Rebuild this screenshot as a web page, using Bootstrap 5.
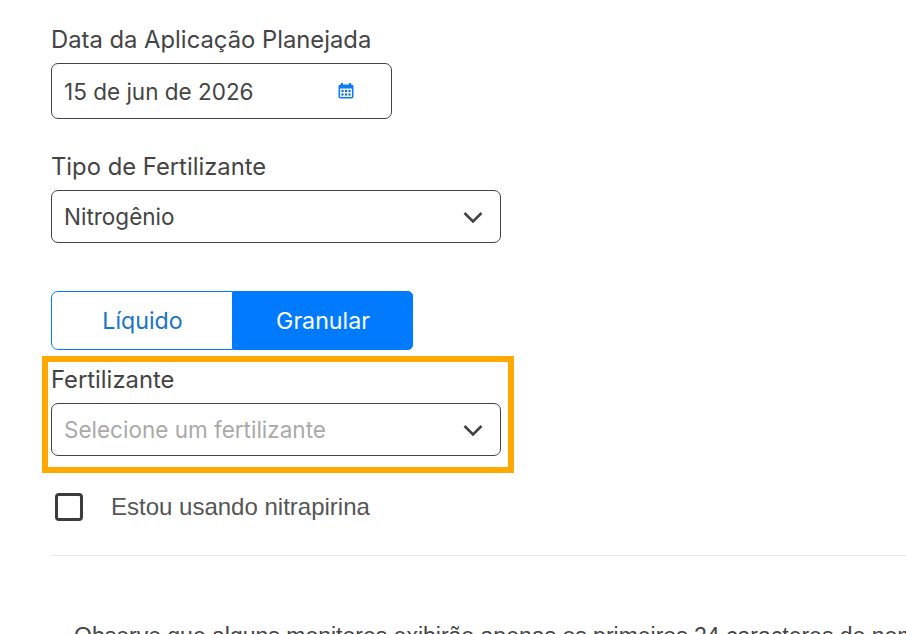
<!DOCTYPE html>
<html lang="pt-BR">
  <head>
    <meta charset="UTF-8" />
    <meta name="viewport" content="width=device-width, initial-scale=1.0" />
    <title>Fertilizante</title>
    <link
      href="https://cdn.jsdelivr.net/npm/bootstrap@5.3.2/dist/css/bootstrap.min.css"
      rel="stylesheet"
    />
    <style>
      html,
      body {
        height: 634px;
        overflow: hidden;
      }
      body {
        font-family: Inter, "Liberation Sans", sans-serif;
        color: #444;
      }
      .page-wrap {
        padding: 26px 0 0 51px;
      }
      .field-label {
        display: block;
        font-size: 23.8px;
        line-height: 27px;
        margin: 0 0 10px 0;
        color: #444;
      }
      .fake-input {
        display: flex;
        align-items: center;
        justify-content: space-between;
        height: 53px;
        width: 450px;
        padding: 0 17px 0 12px;
        font-size: 22.5px;
        color: #444;
        background: #fff;
        border: 1px solid #444;
        border-radius: 7px;
      }
      .fake-input.date-input {
        width: 341px;
        height: 56px;
        padding-top: 2px;
        padding-right: 36px;
        margin-bottom: 34px;
      }
      .fake-input.date-input svg {
        margin-top: -2px;
      }
      .fake-input.placeholder-text {
        color: #a9a9a9;
      }
      .toggle-group {
        display: flex;
        width: 362px;
        height: 59px;
        margin: 48px 0 6px;
      }
      .toggle-group .btn {
        font-size: 23.2px;
        font-family: Inter, "Liberation Sans", sans-serif;
        border-color: #007bff;
        padding: 2px 0 0;
      }
      .toggle-group .btn-off {
        width: 182px;
        padding-left: 1px;
        color: #1a75c9;
        background: #fff;
        border-radius: 7px 0 0 7px;
      }
      .toggle-group .btn-on {
        width: 180px;
        color: #fff;
        background: #007bff;
        border-radius: 0 5px 5px 0;
      }
      .highlight-box {
        width: 472px;
        height: 117px;
        margin-left: -9px;
        padding: 4px 3px 0;
        border: 6px solid #ffa800;
      }
      .highlight-box .field-label {
        margin-bottom: 10px;
      }
      .nitra-row {
        display: flex;
        align-items: center;
        gap: 28px;
        margin: 16px 0 0 4px;
        font-family: "Liberation Sans", sans-serif;
        font-size: 24px;
        color: #555;
      }
      .nitra-box {
        width: 28px;
        height: 28px;
        border: 3px solid #3c3c3c;
        border-radius: 4px;
      }
      .divider {
        margin: 30px 0 0;
        border: 0;
        border-top: 1px solid #e6e6e6;
        opacity: 1;
      }
      .note-text {
        margin: 63px 0 0 23px;
        font-family: "Liberation Sans", sans-serif;
        font-size: 23px;
        white-space: nowrap;
        color: #444;
      }
    </style>
  </head>
  <body>
    <div class="page-wrap">
      <label class="field-label">Data da Aplicação Planejada</label>
      <div class="fake-input date-input">
        <span>15 de jun de 2026</span>
        <svg width="18" height="18" viewBox="0 0 18 18" aria-hidden="true">
          <rect x="1.5" y="2.5" width="15" height="14" rx="2" fill="#0a7cf5" />
          <rect x="4" y="1" width="2" height="3" fill="#0a7cf5" />
          <rect x="12" y="1" width="2" height="3" fill="#0a7cf5" />
          <rect x="3" y="6.5" width="12" height="8.5" rx="0.5" fill="#e6f1fd" />
          <g fill="#0f68c8">
            <rect x="4.5" y="8" width="2" height="2" />
            <rect x="8" y="8" width="2" height="2" />
            <rect x="11.5" y="8" width="2" height="2" />
            <rect x="4.5" y="11.5" width="2" height="2" />
            <rect x="8" y="11.5" width="2" height="2" />
            <rect x="11.5" y="11.5" width="2" height="2" />
          </g>
        </svg>
      </div>

      <label class="field-label">Tipo de Fertilizante</label>
      <div class="fake-input">
        <span>Nitrogênio</span>
        <svg width="20" height="12" viewBox="0 0 20 12" aria-hidden="true">
          <path d="M1.5 2l8.5 8.5 8.5-8.5" fill="none" stroke="#444" stroke-width="2.6" />
        </svg>
      </div>

      <div class="toggle-group">
        <button type="button" class="btn btn-off">Líquido</button>
        <button type="button" class="btn btn-on">Granular</button>
      </div>

      <div class="highlight-box">
        <label class="field-label">Fertilizante</label>
        <div class="fake-input placeholder-text">
          <span>Selecione um fertilizante</span>
          <svg width="20" height="12" viewBox="0 0 20 12" aria-hidden="true">
            <path d="M1.5 2l8.5 8.5 8.5-8.5" fill="none" stroke="#444" stroke-width="2.6" />
          </svg>
        </div>
      </div>

      <div class="nitra-row">
        <span class="nitra-box"></span>
        <span>Estou usando nitrapirina</span>
      </div>

      <hr class="divider" />

      <p class="note-text">
        Observe que alguns monitores exibirão apenas os primeiros 24 caracteres do nome
      </p>
    </div>
    <script src="https://cdn.jsdelivr.net/npm/bootstrap@5.3.2/dist/js/bootstrap.bundle.min.js"></script>
  </body>
</html>
